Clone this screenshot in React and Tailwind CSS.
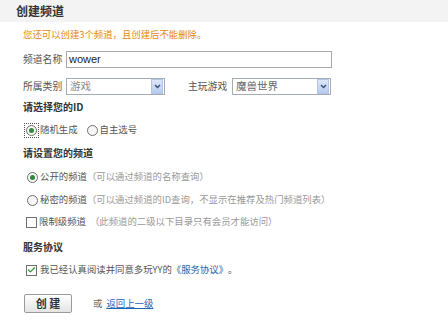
import { Check } from "lucide-react";

const Radio = ({ checked }) => (
    <span className="w-[11px] h-[11px] rounded-full border border-[#707070] bg-[#f7f7f7] flex items-center justify-center shrink-0">
        {checked && <span className="w-[5px] h-[5px] rounded-full bg-[#2f8a3c]" />}
    </span>
);

const Box = ({ checked }) => (
    <span className="w-[11px] h-[11px] border border-[#707070] bg-white flex items-center justify-center shrink-0">
        {checked && <Check size={10} strokeWidth={3.5} className="text-[#2e9a3a]" />}
    </span>
);

const Select = ({ value, muted }) => (
    <div className="w-[99px] h-[17px] border border-[#a5acb5] bg-white flex items-center justify-between">
        <span className={`pl-[3px] text-[10.5px] leading-none ${muted ? "text-[#8a8a8a]" : "text-[#666]"}`}>{value}</span>
        <span className="w-[12px] h-[15px] mr-[1px] bg-gradient-to-b from-[#dde7f8] to-[#b7caee] border border-[#b3c4e6] flex items-center justify-center">
            <svg width="7" height="5" viewBox="0 0 7 5">
                <path d="M1 1 L3.5 3.5 L6 1" fill="none" stroke="#3d4f78" strokeWidth="1.5" />
            </svg>
        </span>
    </div>
);

const App = () => {
    return (
        <div className="w-[448px] h-[321px] bg-white text-[#555] overflow-hidden" style={{ fontFamily: '"Noto Sans CJK SC", "Liberation Sans", sans-serif' }}>
            <div className="h-[22px] bg-[#f3f3f3] flex items-center pl-[16px]">
                <h1 className="text-[12px] font-bold text-[#333] leading-none">创建频道</h1>
            </div>

            <div className="pl-[23px] flex flex-col text-[9.4px] leading-none">
                <div className="mt-[5px] h-[16px] flex items-center text-[#e5870c]">
                    您还可以创建3个频道，且创建后不能删除。
                </div>

                <div className="mt-[8px] h-[17px] flex items-center">
                    <span className="w-[43px] text-[9.8px]">频道名称</span>
                    <div className="w-[266px] h-[17px] border border-[#a9a9a9] bg-white flex items-center pl-[2px]">
                        <span className="text-[11px] text-[#222]" style={{ fontFamily: '"Liberation Sans", sans-serif' }}>wower</span>
                    </div>
                </div>

                <div className="mt-[10px] h-[17px] flex items-center">
                    <span className="w-[43px] text-[9.8px]">所属类别</span>
                    <Select value="游戏" muted />
                    <span className="ml-[23px] w-[44px] text-[9.8px]">主玩游戏</span>
                    <Select value="魔兽世界" />
                </div>

                <div className="mt-[4px] h-[16px] flex items-center font-bold text-[#333] text-[10px]">请选择您的ID</div>

                <div className="mt-[7px] h-[16px] flex items-center">
                    <span className="w-[15px] h-[15px] ml-[1px] border border-dotted border-[#555] flex items-center justify-center">
                        <Radio checked />
                    </span>
                    <span className="ml-[1px]">随机生成</span>
                    <span className="ml-[9px]"><Radio /></span>
                    <span className="ml-[2px]">自主选号</span>
                </div>

                <div className="mt-[7px] h-[16px] flex items-center font-bold text-[#333] text-[10px]">请设置您的频道</div>

                <div className="mt-[8px] h-[16px] flex items-center pl-[4px]">
                    <Radio checked />
                    <span className="ml-[2px]">公开的频道</span>
                    <span className="text-[#999]">（可以通过频道的名称查询）</span>
                </div>

                <div className="mt-[7px] h-[16px] flex items-center pl-[4px]">
                    <Radio />
                    <span className="ml-[2px]">秘密的频道</span>
                    <span className="text-[#999]">（可以通过频道的ID查询，不显示在推荐及热门频道列表）</span>
                </div>

                <div className="mt-[6px] h-[16px] flex items-center pl-[3px]">
                    <Box />
                    <span className="ml-[2px]">限制级频道</span>
                    <span className="ml-[4px] text-[#999]">（此频道的二级以下目录只有会员才能访问）</span>
                </div>

                <div className="mt-[9px] h-[16px] flex items-center font-bold text-[#333] text-[10px]">服务协议</div>

                <div className="mt-[7px] h-[16px] flex items-center pl-[3px]">
                    <Box checked />
                    <span className="ml-[3px]">我已经认真阅读并同意多玩YY的</span>
                    <span className="text-[#2266aa]">《服务协议》</span>
                    <span>。</span>
                </div>

                <div className="mt-[16px] h-[19px] flex items-center">
                    <button className="ml-[1px] w-[48px] h-[19px] border border-[#9a9a9a] rounded-[2px] bg-gradient-to-b from-white to-[#e4e4e4] text-[11px] font-bold text-[#333]">
                        创&nbsp;建
                    </button>
                    <span className="ml-[21px] text-[#666]">或</span>
                    <a href="#" className="ml-[4px] text-[#1a66b3] underline">返回上一级</a>
                </div>
            </div>
        </div>
    );
};

export default App;
